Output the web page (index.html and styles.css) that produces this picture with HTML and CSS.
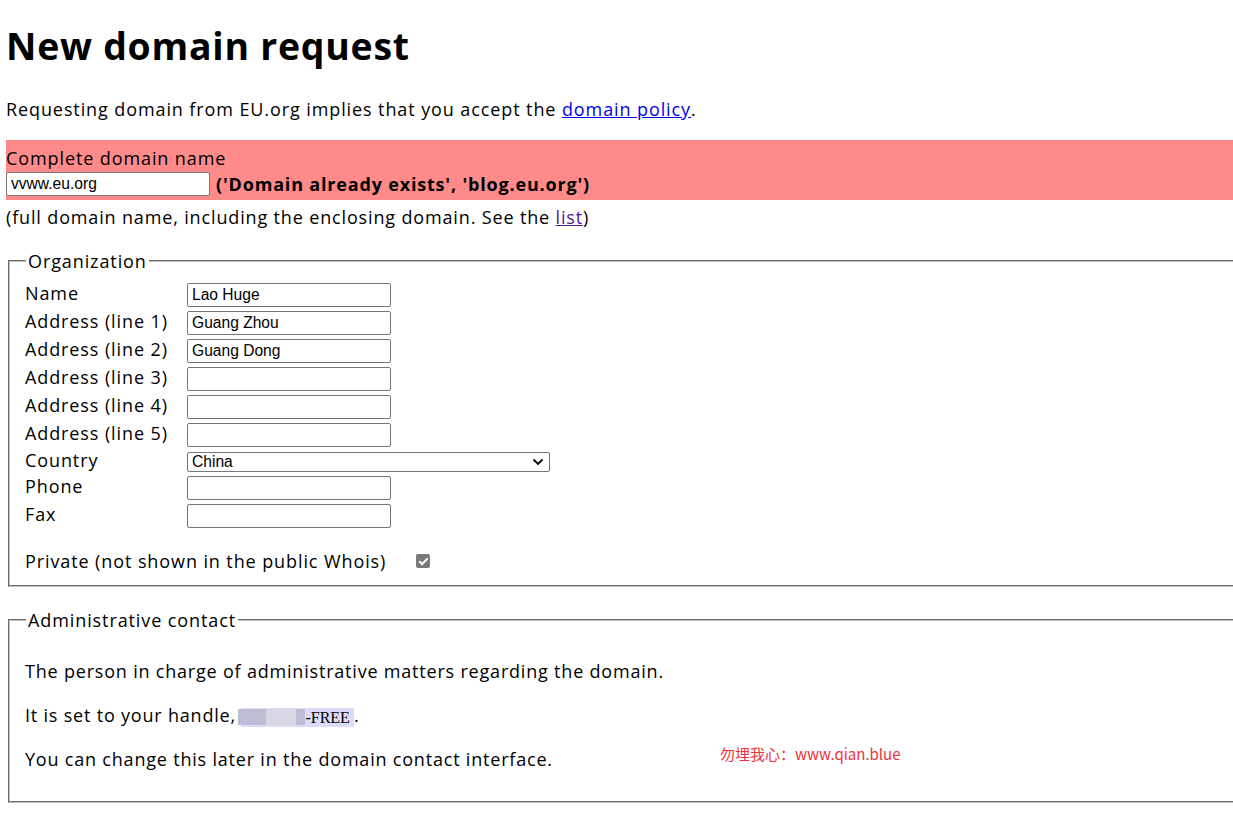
FILE: index.html
```html
<!DOCTYPE html>
<html lang="en">
<head>
<meta charset="utf-8">
<title>New domain request</title>
<link rel="stylesheet" href="styles.css">
</head>
<body>
<h1 class="title">New domain request</h1>
<p class="intro">Requesting domain from EU.org implies that you accept the <a class="link" href="#">domain policy</a>.</p>
<form class="request-form">
  <div class="error-field">
    <div class="field-label">Complete domain name</div>
    <div class="field-row">
      <input class="text-input" type="text" value="vvww.eu.org">
      <strong class="error-msg">('Domain already exists', 'blog.eu.org')</strong>
    </div>
  </div>
  <p class="hint">(full domain name, including the enclosing domain. See the <a class="link visited" href="#">list</a>)</p>

  <fieldset class="group org">
    <legend class="group-title">Organization</legend>
    <div class="org-grid">
      <label class="row-label">Name</label><input class="text-input" type="text" value="Lao Huge">
      <label class="row-label">Address (line 1)</label><input class="text-input" type="text" value="Guang Zhou">
      <label class="row-label">Address (line 2)</label><input class="text-input" type="text" value="Guang Dong">
      <label class="row-label">Address (line 3)</label><input class="text-input" type="text" value="">
      <label class="row-label">Address (line 4)</label><input class="text-input" type="text" value="">
      <label class="row-label">Address (line 5)</label><input class="text-input" type="text" value="">
      <label class="row-label">Country</label>
      <span class="select-wrap">
        <select class="country-select"><option>China</option></select>
        <svg class="select-arrow" width="12" height="8" viewBox="0 0 12 8"><path d="M1.5 1.5 L6 6 L10.5 1.5" fill="none" stroke="#000" stroke-width="1.8"/></svg>
      </span>
      <label class="row-label">Phone</label><input class="text-input" type="text" value="">
      <label class="row-label">Fax</label><input class="text-input" type="text" value="">
    </div>
    <div class="private-row">
      <label class="row-label">Private (not shown in the public Whois)</label>
      <input class="check" type="checkbox" checked>
    </div>
  </fieldset>

  <fieldset class="group admin">
    <legend class="group-title">Administrative contact</legend>
    <p class="admin-text">The person in charge of administrative matters regarding the domain.</p>
    <p class="admin-text">It is set to your handle, <span class="handle"><span class="blur b1"></span><span class="blur b2"></span><span class="blur b3"></span>-FREE </span>.</p>
    <p class="admin-text">You can change this later in the domain contact interface.</p>
  </fieldset>
</form>
<div class="watermark">勿埋我心：www.qian.blue</div>
</body>
</html>
```
FILE: styles.css
```css
html {
  overflow-x: hidden;
}
body {
  margin: 0 0 0 6px;
  font-family: "Open Sans", "Noto Sans", sans-serif;
  font-size: 18px;
  line-height: 24px;
  letter-spacing: 0.9px;
  color: #000;
  background: #fff;
  position: relative;
}
.title {
  margin: 20px 0 26px;
  font-size: 37.4px;
  line-height: 51px;
  font-weight: 700;
  letter-spacing: 0.75px;
}
.intro {
  margin: 0;
}
.link {
  color: #0000ee;
  text-decoration: underline;
}
.link.visited {
  color: #551a8b;
}
.request-form {
  margin: 0;
}
.error-field {
  margin-top: 19px;
  background: #ff8a8a;
  padding: 6px 0 4px;
}
.field-row {
  margin-top: 2px;
  display: flex;
  align-items: center;
  height: 24px;
}
.error-msg {
  margin-left: 6px;
  font-weight: 700;
  letter-spacing: 0.82px;
}
.text-input {
  box-sizing: border-box;
  width: 204px;
  height: 24px;
  margin: 0;
  padding: 0 3px 0 4px;
  border: 1px solid #767676;
  border-radius: 2px;
  background: #fff;
  font-family: "Liberation Sans", Arial, sans-serif;
  font-size: 15.6px;
  letter-spacing: 0;
  color: #000;
}
.hint {
  margin: 5px 0 0;
  letter-spacing: 0.85px;
}
.group {
  margin: 20px -40px 0 2px;
  padding: 8px 0 12px 15px;
  border: 2px groove #c0c0c0;
  min-width: 0;
}
.group-title {
  padding: 0 2px;
  margin-left: 1px;
  line-height: 24px;
}
.org-grid {
  display: grid;
  grid-template-columns: 162px auto;
  grid-template-rows: repeat(5, 28px) 27px 26px 28px 28px;
  align-items: baseline;
  justify-items: start;
}
.row-label {
  line-height: 24px;
}
.select-wrap {
  display: inline-flex;
  position: relative;
}
.country-select {
  appearance: none;
  -webkit-appearance: none;
  box-sizing: border-box;
  width: 363px;
  height: 20px;
  margin: 0;
  padding: 0 3px 0 4px;
  border: 1px solid #767676;
  border-radius: 2px;
  background: #fff;
  font-family: "Liberation Sans", Arial, sans-serif;
  font-size: 15.6px;
  letter-spacing: 0;
  color: #000;
}
.select-arrow {
  position: absolute;
  right: 6px;
  top: 6px;
}
.private-row {
  margin-top: 19px;
  display: flex;
  align-items: center;
  gap: 30px;
}
.check {
  appearance: none;
  -webkit-appearance: none;
  width: 14px;
  height: 14px;
  margin: 0;
  border-radius: 2px;
  background: #7a7a7a;
  position: relative;
}
.check::after {
  content: "";
  position: absolute;
  left: 4.5px;
  top: 1.5px;
  width: 3px;
  height: 7px;
  border-right: 2px solid #fff;
  border-bottom: 2px solid #fff;
  transform: rotate(45deg);
}
.admin {
  margin-top: 21px;
  padding: 7px 0 10px 15px;
}
.admin-text {
  margin: 20px 0;
  letter-spacing: 0.8px;
}
.handle {
  display: inline-flex;
  align-items: center;
  height: 19px;
  vertical-align: -3px;
  background: #dcdcfa;
  font-family: "Liberation Serif", "Times New Roman", serif;
  font-size: 16px;
  letter-spacing: 0;
  white-space: pre;
  line-height: 19px;
  color: #000;
}
.blur {
  display: inline-block;
  height: 16px;
}
.b1 {
  width: 28px;
  margin-left: -3px;
  background: #bdbdd5;
}
.b2 {
  width: 30px;
  background: #d8d8e4;
}
.b3 {
  width: 9px;
  background: #bdbdd5;
}
.watermark {
  position: absolute;
  left: 714px;
  top: 744px;
  font-family: "Noto Sans CJK SC", sans-serif;
  font-size: 15px;
  line-height: 20px;
  letter-spacing: 0;
  color: #f0323c;
}
```
